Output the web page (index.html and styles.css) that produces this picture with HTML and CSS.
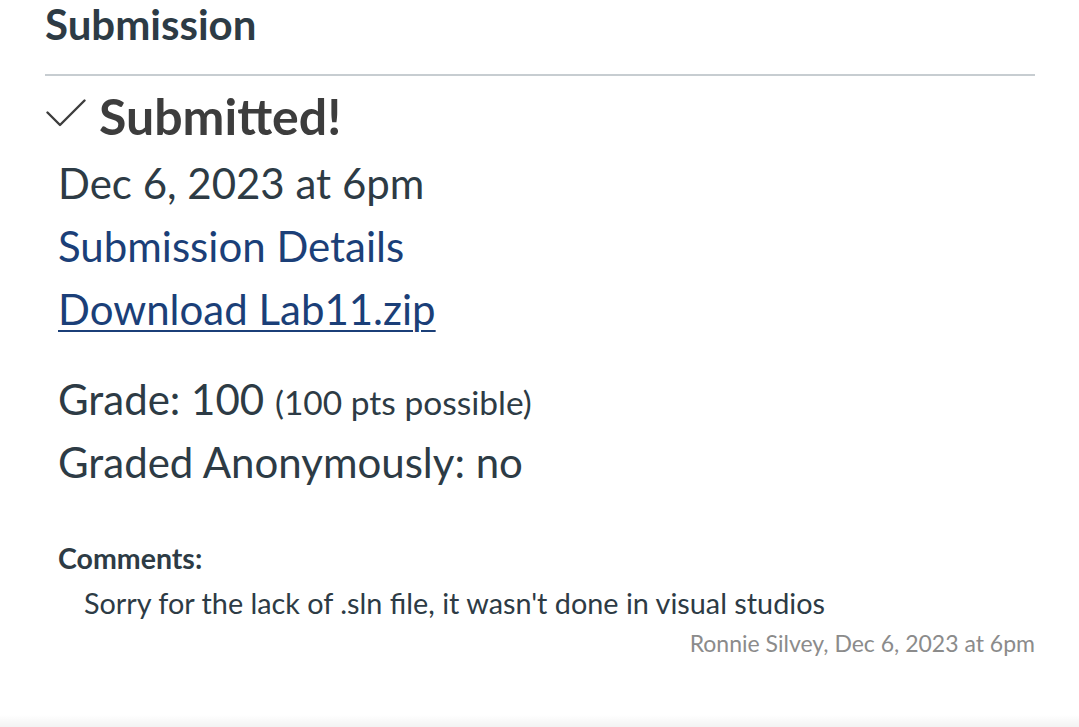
FILE: index.html
```html
<!DOCTYPE html>
<html lang="en">
<head>
<meta charset="utf-8">
<title>Submission</title>
<link rel="stylesheet" href="styles.css">
</head>
<body>
<div class="page">
  <h2 class="title">Submission</h2>
  <div class="status">
    <svg class="check" viewBox="0 0 40 28" width="40" height="28" aria-hidden="true">
      <path d="M1.5 13.5 L14 26 L38.5 1.5" fill="none" stroke="#3d3d3d" stroke-width="2.4" stroke-linecap="round" stroke-linejoin="round"/>
    </svg>
    <span class="status-text">Submitted!</span>
  </div>
  <div class="details">
    <div class="line">Dec 6, 2023 at 6pm</div>
    <div class="line"><a class="link" href="#">Submission Details</a></div>
    <div class="line"><a class="link underline" href="#">Download Lab11.zip</a></div>
    <div class="grade">
      <div class="line">Grade: 100 <span class="small">(100 pts possible)</span></div>
      <div class="line">Graded Anonymously: no</div>
    </div>
  </div>
  <div class="comments">
    <div class="comments-label">Comments:</div>
    <div class="comment">
      <div class="comment-text">Sorry for the lack of .sln file, it wasn't done in visual studios</div>
      <div class="comment-meta">Ronnie Silvey, Dec 6, 2023 at 6pm</div>
    </div>
  </div>
</div>
<div class="bottom-shade"></div>
</body>
</html>
```
FILE: styles.css
```css
html, body {
  margin: 0;
  padding: 0;
  background: #ffffff;
  height: 100%;
}
body {
  font-family: Lato, "Liberation Sans", sans-serif;
  color: #2d3b45;
  position: relative;
  overflow: hidden;
}
.page {
  padding: 0 44px 0 45px;
}
.title {
  margin: 0;
  font-size: 42px;
  font-weight: 700;
  line-height: 48px;
  padding-bottom: 26px;
  border-bottom: 2px solid #c7cdd1;
}
.status {
  display: flex;
  align-items: center;
  gap: 13px;
  margin-top: 11px;
  height: 58px;
}
.check {
  display: block;
  margin-left: 1px;
  margin-bottom: 6px;
}
.status-text {
  font-size: 50px;
  font-weight: 700;
  color: #3d3d3d;
  line-height: 58px;
}
.details {
  padding-left: 13px;
  margin-top: 7px;
}
.line {
  font-size: 42px;
  line-height: 63px;
}
.link {
  color: #1b3f78;
  text-decoration: none;
}
.underline {
  text-decoration: underline;
  text-decoration-thickness: 2px;
  text-underline-offset: 5px;
}
.grade {
  margin-top: 27px;
}
.small {
  font-size: 33.5px;
  line-height: 1;
}
.comments {
  margin-top: 49px;
  padding-left: 13px;
}
.comments-label {
  font-size: 28.5px;
  font-weight: 700;
  line-height: 30px;
}
.comment {
  padding-left: 26px;
  margin-top: 14px;
}
.comment-text {
  font-size: 28.8px;
  line-height: 32px;
}
.comment-meta {
  text-align: right;
  font-size: 23px;
  color: #8b8b8b;
  line-height: 30px;
  margin-top: 9px;
}
.bottom-shade {
  position: absolute;
  left: 0;
  right: 0;
  bottom: 0;
  height: 12px;
  background: linear-gradient(to bottom, rgba(0,0,0,0), rgba(0,0,0,0.05));
}
```
